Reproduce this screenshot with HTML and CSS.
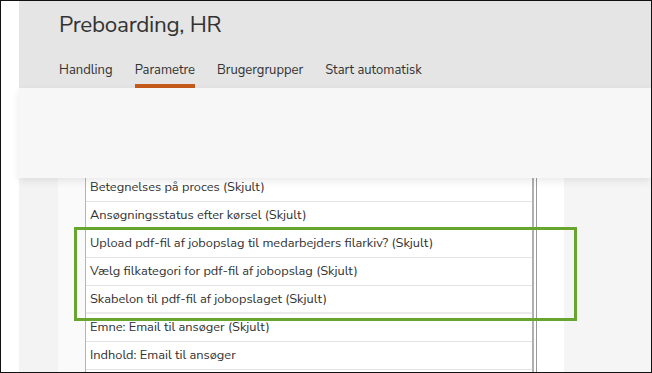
FILE: index.html
```html
<!DOCTYPE html>
<html lang="da">
<head>
    <meta charset="UTF-8">
    <title>Preboarding, HR</title>
    <link rel="stylesheet" href="styles.css">
</head>
<body>
    <div class="frame">
        <div class="gutter"></div>
        <div class="app">
            <div class="head">
                <h1 class="title">Preboarding, HR</h1>
                <div class="tabs">
                    <a class="tab">Handling</a>
                    <a class="tab active">Parametre</a>
                    <a class="tab">Brugergrupper</a>
                    <a class="tab">Start automatisk</a>
                </div>
            </div>
            <div class="panel"></div>
            <div class="content">
                <div class="side-left"></div>
                <div class="pad-left"></div>
                <ul class="params">
                    <li>Betegnelses på proces (Skjult)</li>
                    <li>Ansøgningsstatus efter kørsel (Skjult)</li>
                    <li>Upload pdf-fil af jobopslag til medarbejders filarkiv? (Skjult)</li>
                    <li>Vælg filkategori for pdf-fil af jobopslag (Skjult)</li>
                    <li class="thick">Skabelon til pdf-fil af jobopslaget (Skjult)</li>
                    <li>Emne: Email til ansøger (Skjult)</li>
                    <li>Indhold: Email til ansøger</li>
                    <li></li>
                </ul>
                <div class="scroll-edge"></div>
                <div class="pad-right"></div>
                <div class="side-right"></div>
                <div class="highlight"></div>
            </div>
        </div>
    </div>
</body>
</html>
```

FILE: styles.css
```css
body {
    margin: 0;
    padding: 0;
    font-family: "Nunito Sans", "Open Sans", Arial, sans-serif;
    color: #333;
}

.frame {
    width: 652px;
    height: 373px;
    box-sizing: border-box;
    border: 1px solid #111;
    display: flex;
    overflow: hidden;
    background: #fff;
}

.gutter {
    width: 18px;
    background: #fff;
}

.app {
    flex: 1;
    display: flex;
    flex-direction: column;
    min-width: 0;
}

.head {
    background-color: #e5e5e5;
    height: 87px;
    box-sizing: border-box;
    padding: 8px 0 0 40px;
    display: flex;
    flex-direction: column;
    justify-content: space-between;
}

.title {
    margin: 0;
    font-size: 22.5px;
    font-weight: normal;
    letter-spacing: -0.3px;
    color: #333;
}

.tabs {
    display: flex;
    gap: 22px;
}

.tab {
    font-size: 13px;
    color: #333;
    padding: 0 0 5px;
    border-bottom: 4px solid transparent;
}

.tab.active {
    border-bottom-color: #c55a1b;
    border-radius: 3px 3px 0 0;
}

.panel {
    background-color: #f7f7f7;
    height: 90px;
    position: relative;
    z-index: 1;
    box-shadow: 0 3px 8px rgba(0, 0, 0, 0.09);
}

.content {
    flex: 1;
    display: flex;
    position: relative;
    min-height: 0;
}

.side-left {
    width: 39px;
    background: #f3f3f3;
}

.pad-left {
    width: 27px;
    background: #fafafa;
}

.params {
    list-style-type: none;
    margin: -4px 0 0;
    padding: 0;
    width: 446px;
    border-left: 1px solid #b5b5b5;
    background: #fff;
}

.params li {
    height: 27px;
    line-height: 27px;
    padding-left: 4px;
    font-size: 12.8px;
    border-bottom: 1px solid #e2e2e2;
    white-space: nowrap;
}

.params li.thick {
    height: 26px;
    border-bottom: 2px solid #ebebeb;
}

.scroll-edge {
    width: 2px;
    border-left: 2px solid #b0b0b0;
    border-right: 1px solid #9a9a9a;
    background: #fff;
}

.pad-right {
    width: 27px;
    background: #fff;
}

.side-right {
    flex: 1;
    background: #f5f5f5;
}

.highlight {
    position: absolute;
    left: 55px;
    top: 49px;
    width: 497px;
    height: 88px;
    border: 3px solid #67a52e;
}
```
